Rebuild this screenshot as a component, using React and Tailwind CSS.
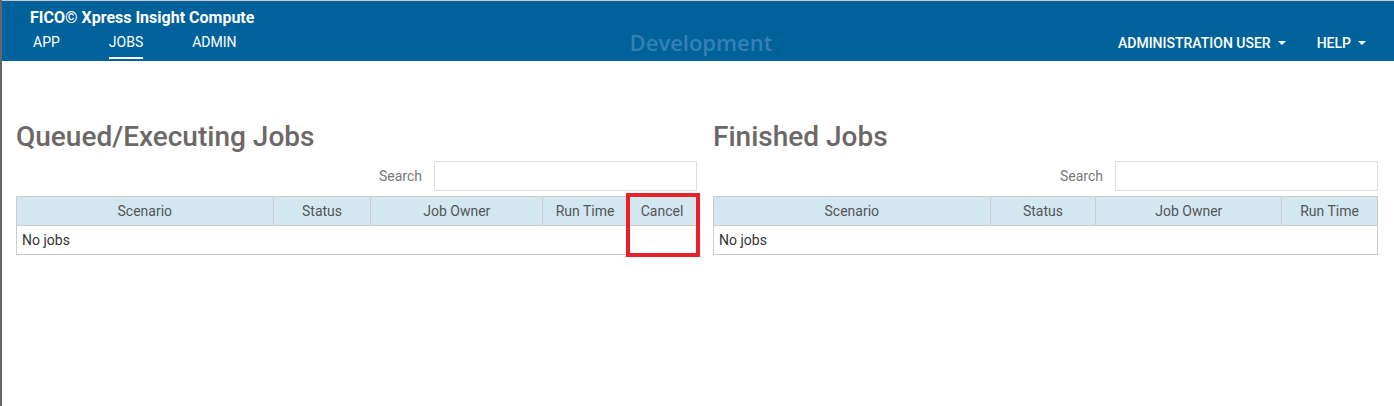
import React from "react";

const queuedCols = [
  { label: "Scenario", w: "w-[257px]" },
  { label: "Status", w: "w-[98px]" },
  { label: "Job Owner", w: "w-[172px]" },
  { label: "Run Time", w: "w-[85px]" },
  { label: "Cancel", w: "w-[69px]" },
];

const finishedCols = [
  { label: "Scenario", w: "w-[277px]" },
  { label: "Status", w: "w-[106px]" },
  { label: "Job Owner", w: "w-[186px]" },
  { label: "Run Time", w: "w-[96px]" },
];

const Caret = () => (
  <span className="ml-[7px] inline-block h-0 w-0 border-x-[4px] border-t-[4px] border-x-transparent border-t-white align-middle" />
);

const JobsPanel = ({ title, cols, width, highlight }) => (
  <div className={`${width} flex flex-col`}>
    <h2 className="h-[36px] text-[28px] font-medium leading-[36px] text-[#6b6866]">{title}</h2>
    <div className="mt-[6px] flex items-center justify-end gap-[12px]">
      <label className="text-[14px] text-[#777]">Search</label>
      <input
        type="text"
        className="h-[30px] w-[263px] border border-[#ddd] bg-white px-2 text-[14px] outline-none"
      />
    </div>
    <div className="relative mt-[5px]">
      <table className="w-full border-collapse text-[14px] text-[#555]">
        <thead>
          <tr className="bg-[#d3e7f1]">
            {cols.map((c) => (
              <th
                key={c.label}
                className={`${c.w} h-[29px] border border-[#ccc] p-0 text-center font-normal`}
              >
                {c.label}
              </th>
            ))}
          </tr>
        </thead>
        <tbody>
          <tr>
            <td colSpan={cols.length} className="h-[29px] border border-[#ccc] px-[5px] text-left text-[#333]">
              No jobs
            </td>
          </tr>
        </tbody>
      </table>
      {highlight && (
        <div className="absolute right-[-3px] top-[-3px] h-[64px] w-[74px] border-[4px] border-[#e8202a]" />
      )}
    </div>
  </div>
);

export default function App() {
  return (
    <div className="min-h-[406px] border-l-2 border-[#666] bg-white" style={{ fontFamily: "Roboto, 'Liberation Sans', sans-serif" }}>
      <header className="h-[61px] border-t border-[#ccc] bg-[#00629b] text-white">
        <div className="pl-[28px] pt-[7px] text-[16px] font-bold leading-[19px]">FICO© Xpress Insight Compute</div>
        <div className="grid grid-cols-[1fr_auto_1fr] items-center">
          <nav className="flex gap-[49px] pl-[31px] text-[14px]">
            <a className="pt-[5px] pb-[6px]">APP</a>
            <a className="border-b-2 border-white pt-[5px] pb-[4px]">JOBS</a>
            <a className="pt-[5px] pb-[6px]">ADMIN</a>
          </nav>
          <div
            className="ml-[6px] mt-[-2px] text-[22px] font-semibold leading-[30px] text-[#3580b3]"
            style={{ fontFamily: "'Open Sans', sans-serif" }}
          >
            Development
          </div>
          <nav className="flex justify-end gap-[31px] pr-[28px] text-[14px] font-medium">
            <span className="flex items-center">
              ADMINISTRATION USER
              <Caret />
            </span>
            <span className="flex items-center">
              HELP
              <Caret />
            </span>
          </nav>
        </div>
      </header>
      <main className="flex gap-[16px] pl-[14px] pt-[58px]">
        <JobsPanel title="Queued/Executing Jobs" cols={queuedCols} width="w-[681px]" highlight />
        <JobsPanel title="Finished Jobs" cols={finishedCols} width="w-[665px]" />
      </main>
    </div>
  );
}
